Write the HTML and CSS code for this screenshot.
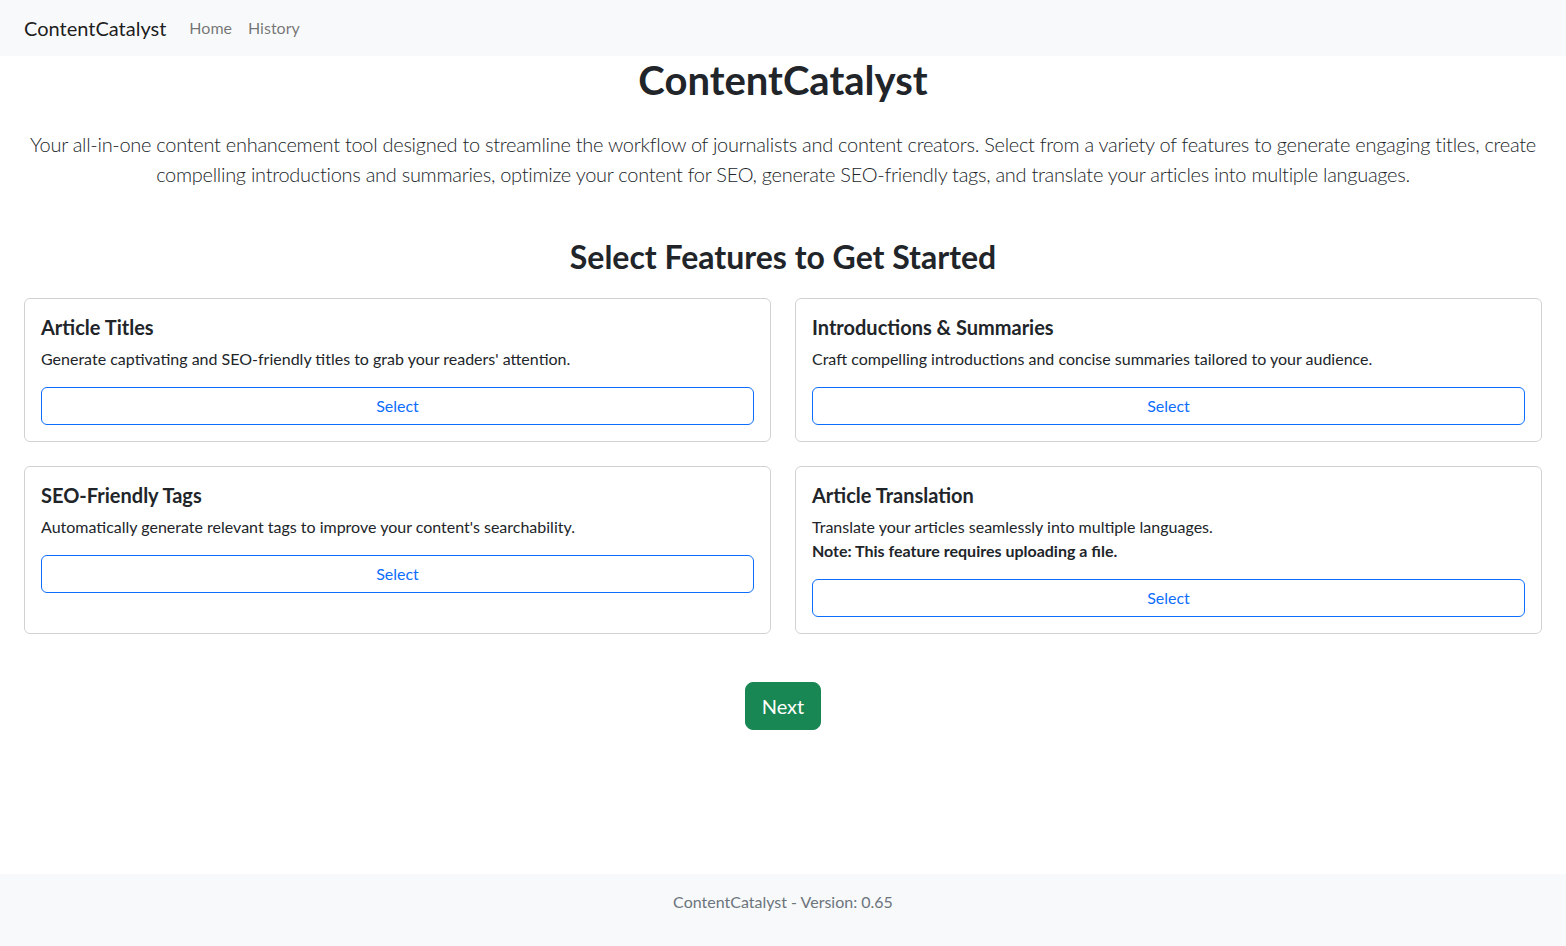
FILE: index.html
```html
<!DOCTYPE html>
<html lang="en">
<head>
<meta charset="utf-8">
<title>ContentCatalyst</title>
<link rel="stylesheet" href="styles.css">
</head>
<body>
<nav class="navbar">
  <a class="brand" href="#">ContentCatalyst</a>
  <ul class="nav-links">
    <li><a href="#">Home</a></li>
    <li><a href="#">History</a></li>
  </ul>
</nav>
<main class="main">
  <h1 class="page-title">ContentCatalyst</h1>
  <p class="lead">Your all-in-one content enhancement tool designed to streamline the workflow of journalists and content creators. Select from a variety of features to generate engaging titles, create compelling introductions and summaries, optimize your content for SEO, generate SEO-friendly tags, and translate your articles into multiple languages.</p>
  <h2 class="section-title">Select Features to Get Started</h2>
  <div class="features">
    <div class="card">
      <h5 class="card-title">Article Titles</h5>
      <p class="card-text">Generate captivating and SEO-friendly titles to grab your readers' attention.</p>
      <button class="btn-select">Select</button>
    </div>
    <div class="card">
      <h5 class="card-title">Introductions &amp; Summaries</h5>
      <p class="card-text">Craft compelling introductions and concise summaries tailored to your audience.</p>
      <button class="btn-select">Select</button>
    </div>
    <div class="card">
      <h5 class="card-title">SEO-Friendly Tags</h5>
      <p class="card-text">Automatically generate relevant tags to improve your content's searchability.</p>
      <button class="btn-select">Select</button>
    </div>
    <div class="card">
      <h5 class="card-title">Article Translation</h5>
      <p class="card-text">Translate your articles seamlessly into multiple languages.<br><strong>Note: This feature requires uploading a file.</strong></p>
      <button class="btn-select">Select</button>
    </div>
  </div>
  <div class="actions">
    <button class="btn-next">Next</button>
  </div>
</main>
<footer class="footer">
  <p>ContentCatalyst - Version: 0.65</p>
</footer>
</body>
</html>
```

FILE: styles.css
```css
* { box-sizing: border-box; }
html, body { height: 100%; }
body {
  margin: 0;
  font-family: "Lato", "Open Sans", sans-serif;
  font-size: 16px;
  line-height: 1.5;
  color: #212529;
  background: #fff;
  display: flex;
  flex-direction: column;
  min-height: 100vh;
}
.navbar {
  background: #f8f9fa;
  height: 56px;
  display: flex;
  align-items: center;
  padding: 0 24px;
}
.brand {
  font-size: 20px;
  line-height: 30px;
  color: rgba(0,0,0,.9);
  text-decoration: none;
  margin-right: 15px;
}
.nav-links {
  list-style: none;
  margin: 0;
  padding: 0;
  display: flex;
}
.nav-links a {
  display: block;
  padding: 8px 8px;
  color: rgba(0,0,0,.55);
  text-decoration: none;
  font-size: 16px;
}
.main {
  flex: 1;
  padding: 0 24px;
}
.page-title {
  margin: 0;
  text-align: center;
  font-size: 40px;
  line-height: 48px;
  font-weight: 700;
}
.lead {
  margin: 25px 0 0;
  text-align: center;
  font-size: 20px;
  line-height: 30px;
  font-weight: 300;
  letter-spacing: -0.28px;
}
.section-title {
  margin: 49px 0 22px;
  text-align: center;
  font-size: 32px;
  line-height: 38px;
  font-weight: 700;
}
.features {
  display: grid;
  grid-template-columns: 1fr 1fr;
  gap: 24px;
}
.card {
  border: 1px solid rgba(0,0,0,.175);
  border-radius: 6px;
  padding: 16px;
}
.card-title {
  margin: 0 0 8px;
  font-size: 20px;
  line-height: 24px;
  font-weight: 700;
}
.card-text {
  margin: 0 0 16px;
}
.card-text strong { font-weight: 700; }
.btn-select {
  display: block;
  width: 100%;
  height: 38px;
  font: inherit;
  color: #0d6efd;
  background: #fff;
  border: 1px solid #0d6efd;
  border-radius: 6px;
  padding: 6px 12px;
}
.actions {
  display: flex;
  justify-content: center;
  margin-top: 48px;
}
.btn-next {
  font-family: inherit;
  font-size: 20px;
  line-height: 30px;
  padding: 8px 16px;
  color: #fff;
  background: #198754;
  border: 1px solid #198754;
  border-radius: 8px;
}
.footer {
  background: #f8f9fa;
  padding: 16px 0;
  text-align: center;
  color: #6c757d;
}
.footer p { margin: 0 0 16px; }
```
